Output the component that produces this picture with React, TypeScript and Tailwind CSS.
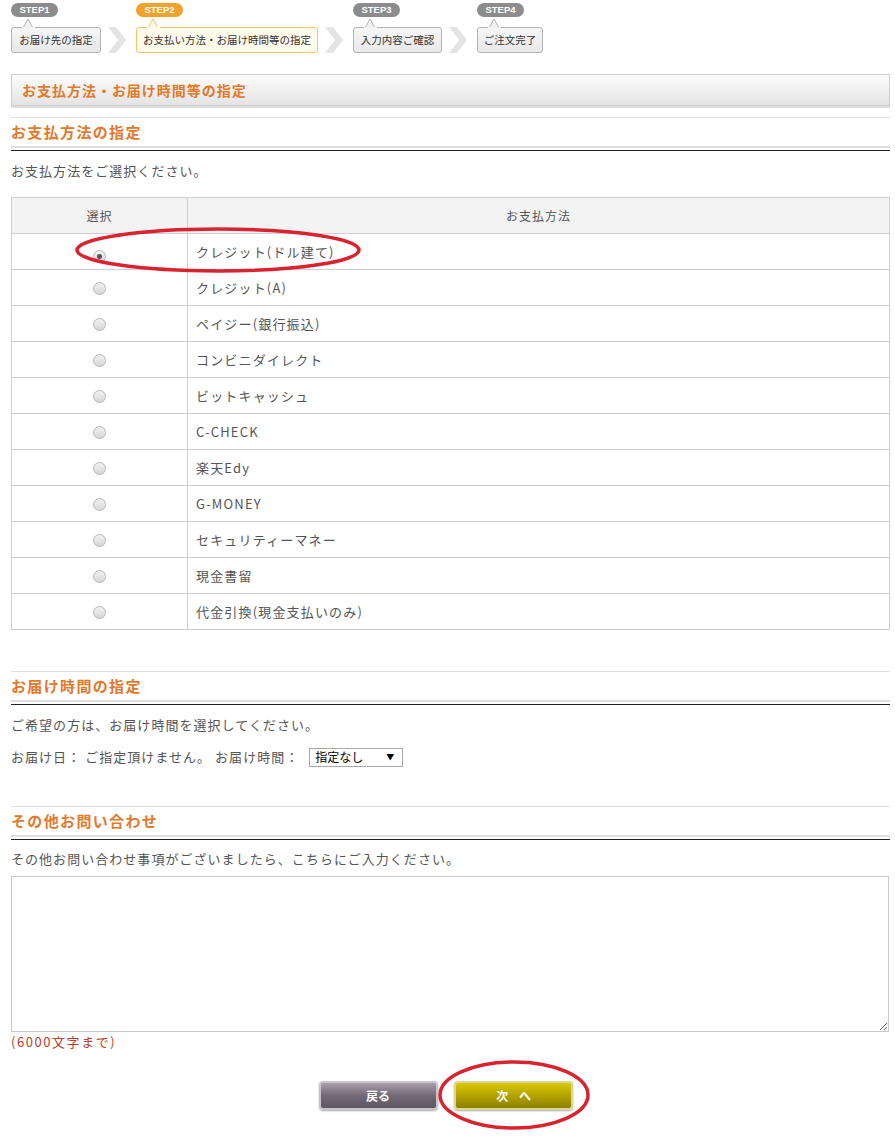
import React from 'react'

const FONT = '"Noto Sans CJK JP", "Liberation Sans", sans-serif'

const steps = [
  { no: 'STEP1', label: 'お届け先の指定', w: 'w-[90px]', active: false },
  { no: 'STEP2', label: 'お支払い方法・お届け時間等の指定', w: 'w-[182px]', active: true },
  { no: 'STEP3', label: '入力内容ご確認', w: 'w-[89px]', active: false },
  { no: 'STEP4', label: 'ご注文完了', w: 'w-[66px]', active: false },
]

const payments = [
  'クレジット(ドル建て)',
  'クレジット(A)',
  'ペイジー(銀行振込)',
  'コンビニダイレクト',
  'ビットキャッシュ',
  'C-CHECK',
  '楽天Edy',
  'G-MONEY',
  'セキュリティーマネー',
  '現金書留',
  '代金引換(現金支払いのみ)',
]

function Chevron() {
  return (
    <svg width="35" height="26" viewBox="0 0 35 26" className="shrink-0">
      <polygon points="7,0 15,0 25,13 15,26 7,26 17,13" fill="#e4e4e4" />
    </svg>
  )
}

function Step({ no, label, w, active }: { no: string; label: string; w: string; active: boolean }) {
  const border = active ? '#f0c46a' : '#b4b4b4'
  const fill = active ? '#fffaea' : '#f0f0f0'
  return (
    <div className="flex flex-col shrink-0">
      <div
        className={`h-[14px] w-[47px] rounded-full flex items-center justify-center text-[9.5px] font-bold text-white ${
          active ? 'bg-[#f2a12c]' : 'bg-[#8c8c8c]'
        }`}
        style={{ fontFamily: '"Liberation Sans", sans-serif' }}
      >
        {no}
      </div>
      <svg width="20" height="11" viewBox="0 0 20 11" className="ml-[8px] -mb-px relative z-10">
        <polygon points="4,11 9,2 14,11" fill={fill} stroke={border} strokeWidth="1" />
        <rect x="3" y="10" width="13" height="2" fill={fill} />
      </svg>
      <div
        className={`${w} h-[26px] rounded-[3px] border flex items-center justify-center text-[10.5px] text-[#333] whitespace-nowrap ${
          active ? 'border-[#f0c46a] bg-[#fffaea]' : 'border-[#b4b4b4] bg-gradient-to-b from-[#f6f6f6] to-[#e8e8e8]'
        }`}
      >
        {label}
      </div>
    </div>
  )
}

function SectionTitle({ children }: { children: React.ReactNode }) {
  return (
    <div>
      <div className="border-t border-[#dedede] h-[31px] flex items-center border-b-2 border-b-[#dedede]">
        <span className="text-[15px] font-bold text-[#e3792b] tracking-[0.09em]">{children}</span>
      </div>
      <div className="mt-[2px] h-px bg-[#222]" />
    </div>
  )
}

function Radio({ checked }: { checked?: boolean }) {
  return (
    <span className="inline-flex w-[13px] h-[13px] rounded-full border border-[#b9b9b9] bg-gradient-to-b from-[#f2f2f2] to-[#d6d6d6] items-center justify-center">
      {checked && <span className="w-[5px] h-[5px] rounded-full bg-[#555]" />}
    </span>
  )
}

export default function App() {
  return (
    <div
      className="relative w-[895px] min-h-[1145px] bg-white text-[13px] text-[#555] tracking-[0.08em]"
      style={{ fontFamily: FONT }}
    >
      <div className="pl-[11px] pr-[5px]">
        {/* steps */}
        <div className="flex items-end pt-[3px] tracking-normal">
          {steps.map((s, i) => (
            <React.Fragment key={s.no}>
              {i > 0 && <Chevron />}
              <Step {...s} />
            </React.Fragment>
          ))}
        </div>

        {/* page header */}
        <div className="mt-[21px] h-[32px] border border-[#cfcfcf] bg-gradient-to-b from-[#fdfdfd] to-[#e4e4e4] flex items-center pl-[10px] shadow-[0_2px_0_#dedede]">
          <span className="text-[14px] font-bold text-[#e3792b] tracking-[0.07em]">お支払方法・お届け時間等の指定</span>
        </div>

        <div className="mt-[11px]">
          <SectionTitle>お支払方法の指定</SectionTitle>
        </div>
        <p className="mt-[10px] leading-[20px]">お支払方法をご選択ください。</p>

        <table className="mt-[16px] w-full border-collapse border border-[#cfcfcf]">
          <thead>
            <tr className="h-[36px] bg-[#f3f3f3]">
              <th className="w-[176px] border border-[#cfcfcf] font-normal text-[12px] text-[#555]">選択</th>
              <th className="border border-[#cfcfcf] font-normal text-[12px] text-[#555]">お支払方法</th>
            </tr>
          </thead>
          <tbody>
            {payments.map((p, i) => (
              <tr key={p} className="h-[36px]">
                <td className="border border-[#cfcfcf] text-center align-middle">
                  <span className="relative top-[2px]">
                    <Radio checked={i === 0} />
                  </span>
                </td>
                <td className="border border-[#cfcfcf] pl-[8px] tracking-[0.09em]">{p}</td>
              </tr>
            ))}
          </tbody>
        </table>

        <div className="mt-[41px]">
          <SectionTitle>お届け時間の指定</SectionTitle>
        </div>
        <p className="mt-[10px] leading-[20px]">ご希望の方は、お届け時間を選択してください。</p>
        <div className="mt-[12px] flex items-center h-[20px]">
          <span>お届け日： ご指定頂けません。 お届け時間：</span>
          <div className="ml-[10px] w-[94px] h-[19px] border border-[#a9a9a9] flex items-center justify-between pl-[5px] pr-[8px] text-[12px] text-black tracking-normal">
            <span>指定なし</span>
            <span className="text-[8px]">▼</span>
          </div>
        </div>

        <div className="mt-[39px]">
          <SectionTitle>その他お問い合わせ</SectionTitle>
        </div>
        <p className="mt-[9px] leading-[20px]">その他お問い合わせ事項がございましたら、こちらにご入力ください。</p>
        <textarea className="mt-[7px] block w-[878px] h-[156px] border border-[#c8c8c8] outline-none" />
        <p className="mt-0 leading-[20px] text-[#b8402a] tracking-[0.12em]">(6000文字まで)</p>

        <div className="mt-[29px] flex justify-center gap-[16px] pr-[10px]">
          <button className="w-[119px] h-[29px] rounded-[4px] border-2 border-[#c9c4cc] bg-gradient-to-b from-[#a79dab] via-[#736a78] to-[#5e5664] text-white text-[12px] font-bold tracking-normal shadow-[0_1px_2px_rgba(0,0,0,0.35)]">
            戻る
          </button>
          <button className="w-[119px] h-[29px] rounded-[4px] border-2 border-[#ddd594] bg-gradient-to-b from-[#d9c900] via-[#b3a300] to-[#8e7f00] text-white text-[12px] font-bold shadow-[0_1px_2px_rgba(0,0,0,0.35)] tracking-[0.9em] pl-[12px]">
            次へ
          </button>
        </div>
      </div>

      {/* red annotation ellipses */}
      <svg className="absolute left-[72px] top-[224px] pointer-events-none" width="292" height="52" viewBox="0 0 292 52">
        <ellipse cx="146" cy="26" rx="141" ry="21" fill="none" stroke="#d9232e" strokeWidth="3.5" />
      </svg>
      <svg className="absolute left-[437px] top-[1058px] pointer-events-none" width="156" height="76" viewBox="0 0 156 76">
        <ellipse cx="77" cy="37" rx="74" ry="33" fill="none" stroke="#d9232e" strokeWidth="3.5" />
      </svg>
    </div>
  )
}
